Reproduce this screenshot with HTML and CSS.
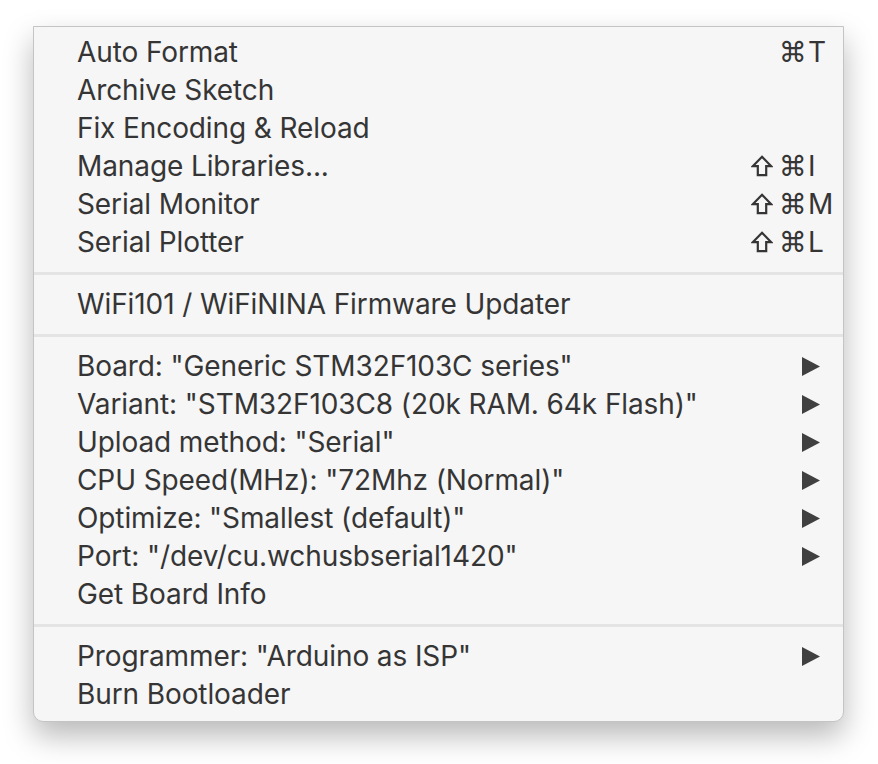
FILE: index.html
```html
<!DOCTYPE html>
<html lang="en">
<head>
    <meta charset="UTF-8">
    <meta name="viewport" content="width=device-width, initial-scale=1.0">
    <title>Tools Menu</title>
    <link rel="stylesheet" href="styles.css">
</head>
<body>
    <div class="menu">
        <div class="item"><span class="label">Auto Format</span><span class="keys"><span class="cmd">⌘</span><span class="key">T</span></span></div>
        <div class="item"><span class="label">Archive Sketch</span></div>
        <div class="item"><span class="label">Fix Encoding &amp; Reload</span></div>
        <div class="item"><span class="label">Manage Libraries...</span><span class="keys"><svg class="shift" viewBox="0 0 22 22"><path d="M11 1.8 L20.2 11.2 L15.2 11.2 L15.2 20.2 L6.8 20.2 L6.8 11.2 L1.8 11.2 Z"/></svg><span class="cmd">⌘</span><span class="key">I</span></span></div>
        <div class="item"><span class="label">Serial Monitor</span><span class="keys"><svg class="shift" viewBox="0 0 22 22"><path d="M11 1.8 L20.2 11.2 L15.2 11.2 L15.2 20.2 L6.8 20.2 L6.8 11.2 L1.8 11.2 Z"/></svg><span class="cmd">⌘</span><span class="key">M</span></span></div>
        <div class="item"><span class="label">Serial Plotter</span><span class="keys"><svg class="shift" viewBox="0 0 22 22"><path d="M11 1.8 L20.2 11.2 L15.2 11.2 L15.2 20.2 L6.8 20.2 L6.8 11.2 L1.8 11.2 Z"/></svg><span class="cmd">⌘</span><span class="key">L</span></span></div>

        <div class="sep"></div>

        <div class="item"><span class="label">WiFi101 / WiFiNINA Firmware Updater</span></div>

        <div class="sep"></div>

        <div class="item"><span class="label">Board: "Generic STM32F103C series"</span><svg class="arrow" viewBox="0 0 18 19"><path d="M0 0 L18 9.5 L0 19 Z"/></svg></div>
        <div class="item"><span class="label">Variant: "STM32F103C8 (20k RAM. 64k Flash)"</span><svg class="arrow" viewBox="0 0 18 19"><path d="M0 0 L18 9.5 L0 19 Z"/></svg></div>
        <div class="item"><span class="label">Upload method: "Serial"</span><svg class="arrow" viewBox="0 0 18 19"><path d="M0 0 L18 9.5 L0 19 Z"/></svg></div>
        <div class="item"><span class="label">CPU Speed(MHz): "72Mhz (Normal)"</span><svg class="arrow" viewBox="0 0 18 19"><path d="M0 0 L18 9.5 L0 19 Z"/></svg></div>
        <div class="item"><span class="label">Optimize: "Smallest (default)"</span><svg class="arrow" viewBox="0 0 18 19"><path d="M0 0 L18 9.5 L0 19 Z"/></svg></div>
        <div class="item"><span class="label">Port: "/dev/cu.wchusbserial1420"</span><svg class="arrow" viewBox="0 0 18 19"><path d="M0 0 L18 9.5 L0 19 Z"/></svg></div>
        <div class="item"><span class="label">Get Board Info</span></div>

        <div class="sep"></div>

        <div class="item"><span class="label">Programmer: "Arduino as ISP"</span><svg class="arrow" viewBox="0 0 18 19"><path d="M0 0 L18 9.5 L0 19 Z"/></svg></div>
        <div class="item"><span class="label">Burn Bootloader</span></div>
    </div>
</body>
</html>
```

FILE: styles.css
```css
html, body {
    min-height: 764px;
}
body {
    margin: 0;
    padding: 26px 0 0 33px;
    background: #ffffff;
    font-family: Inter, "Noto Sans", sans-serif;
    color: #353535;
    box-sizing: border-box;
}
.menu {
    width: 809px;
    background: #f6f6f6;
    border: 1px solid #c4c4c4;
    border-radius: 0 0 10px 10px;
    padding: 6px 0 8px 0;
    box-shadow: 0 14px 30px rgba(0,0,0,0.28);
}
.item {
    display: flex;
    align-items: center;
    height: 38px;
    padding-left: 43px;
    font-size: 28px;
    letter-spacing: -0.1px;
}
.label {
    flex: 1;
    white-space: nowrap;
}
.keys {
    display: flex;
    align-items: center;
}
.shift {
    width: 22px;
    height: 22px;
    margin-right: 6px;
    fill: none;
    stroke: #353535;
    stroke-width: 2.2;
}
.cmd {
    font-family: "DejaVu Sans", sans-serif;
}
.key {
    width: 35px;
    padding-left: 1px;
}
.arrow {
    width: 18px;
    height: 19px;
    margin-right: 23px;
    fill: #404040;
}
.sep {
    height: 3px;
    background: #e4e4e4;
    margin: 11px 0 10px 0;
}
```
